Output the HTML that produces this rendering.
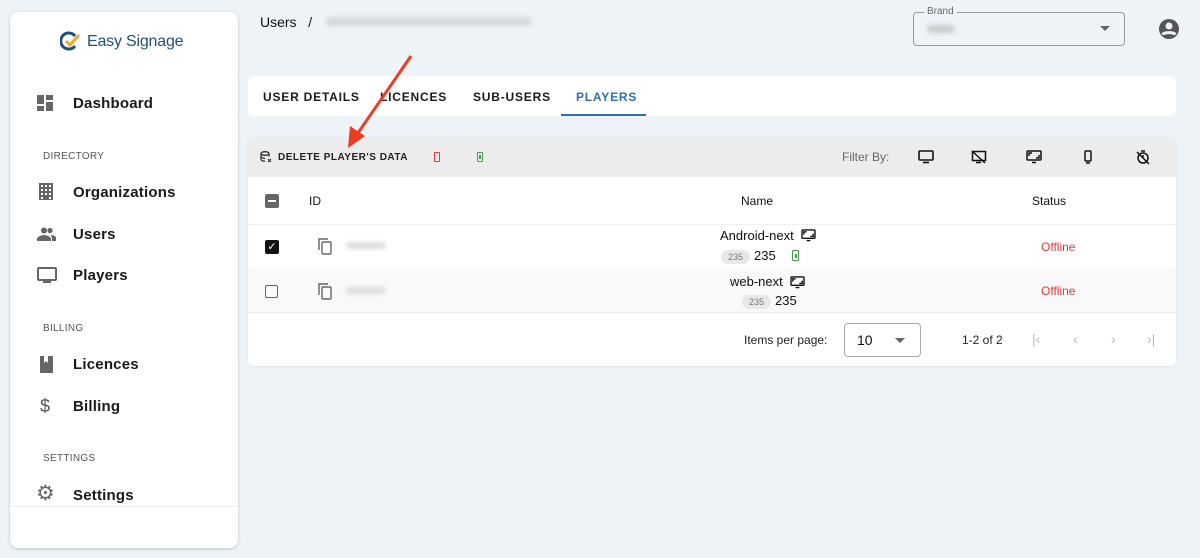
<!DOCTYPE html>
<html><head><style>
*{box-sizing:border-box;margin:0;padding:0}
body{width:1200px;height:558px;background:#eef3f8;font-family:"Liberation Sans",sans-serif;color:#111;position:relative;overflow:hidden}
.abs{position:absolute}
.side{left:10px;top:12px;width:228px;height:536px;background:#fff;border-radius:8px;box-shadow:0 1px 3px rgba(0,0,0,.2)}
.nav{position:absolute;left:73px;font-size:15px;font-weight:bold;color:#1a1a1a;letter-spacing:.2px}
.sec{position:absolute;left:43px;font-size:10px;color:#555;letter-spacing:.3px}
.ic{position:absolute;left:37px}
.tab{position:absolute;top:90px;font-size:12px;font-weight:bold;letter-spacing:.8px;color:#1a1a1a}
.blur{background:#ccc;filter:blur(2px);border-radius:4px}
.chip{display:inline-block;background:#e8e8e8;border-radius:8px;font-size:9px;color:#777;padding:2px 7px;margin-right:4px}
</style></head><body>
<div class="abs side"></div>
<svg class="abs" style="left:60px;top:31px" width="22" height="20" viewBox="0 0 22 20"><path d="M15 5A8 8 0 1 0 15 15" fill="none" stroke="#1f4f80" stroke-width="3"/><path d="M6 10l4 4 9-10" fill="none" stroke="#f1a52b" stroke-width="3"/></svg>
<div class="abs" style="left:87px;top:33px;font-size:16px;color:#1f4f80;letter-spacing:-.2px">Easy Signage</div>
<svg class="ic" style="top:95px" width="17" height="17" viewBox="0 0 17 17" fill="#666"><rect x="0" y="0" width="7" height="9"/><rect x="9" y="0" width="7" height="5"/><rect x="0" y="11" width="7" height="5"/><rect x="9" y="7" width="7" height="9"/></svg>
<div class="nav" style="top:95px">Dashboard</div>
<div class="sec" style="top:151px">DIRECTORY</div>
<svg class="ic" style="top:183px;left:39px" width="14" height="17" viewBox="0 0 14 17" fill="#666"><path d="M0 0h14v17H0z M2 2v2h2V2z M6 2v2h2V2z M10 2v2h2V2z M2 6v2h2V6z M6 6v2h2V6z M10 6v2h2V6z M2 10v2h2v-2z M6 10v2h2v-2z M10 10v2h2v-2z M2 14v2h2v-2z M10 14v2h2v-2z" fill-rule="evenodd"/></svg>
<div class="nav" style="top:184px">Organizations</div>
<svg class="ic" style="top:227px" width="19" height="14" viewBox="0 0 19 14" fill="#666"><circle cx="7" cy="3.5" r="3"/><circle cx="13" cy="3.5" r="2.6"/><path d="M0 14v-2c0-2 4-4 7-4s7 2 7 4v2z"/><path d="M14 8c3 0 5 1.5 5 3v3h-4v-2c0-1-0.5-2-1-4z"/></svg>
<div class="nav" style="top:226px">Users</div>
<svg class="ic" style="top:267px" width="20" height="17" viewBox="0 0 20 17"><rect x="1" y="1" width="18" height="12" rx="1" fill="none" stroke="#666" stroke-width="2"/><rect x="6" y="14" width="8" height="2" fill="#666"/></svg>
<div class="nav" style="top:267px">Players</div>
<div class="sec" style="top:323px">BILLING</div>
<svg class="ic" style="top:356px;left:39px" width="15" height="17" viewBox="0 0 15 17" fill="#666"><path d="M1 0h4v7l2-2 2 2V0h5v17H1z"/></svg>
<div class="nav" style="top:356px">Licences</div>
<div class="abs" style="left:40px;top:396px;font-size:18px;color:#555">$</div>
<div class="nav" style="top:398px">Billing</div>
<div class="sec" style="top:453px">SETTINGS</div>
<div class="abs" style="left:36px;top:483px;font-size:21px;color:#666;line-height:22px">⚙</div>
<div class="nav" style="top:487px">Settings</div>
<div class="abs" style="left:10px;top:506px;width:228px;height:1px;background:#eee"></div>

<div class="abs" style="left:260px;top:14px;font-size:14px">Users &nbsp; /</div>
<div class="abs blur" style="left:326px;top:17px;width:205px;height:9px;background:#d5d8dc"></div>
<div class="abs" style="left:913px;top:12px;width:212px;height:34px;border:1px solid #999;border-radius:4px"></div>
<div class="abs" style="left:924px;top:6px;font-size:10px;color:#666;background:#eef3f8;padding:0 3px">Brand</div>
<div class="abs blur" style="left:927px;top:25px;width:28px;height:8px;background:#ccc"></div>
<div class="abs" style="left:1100px;top:26px;border:5px solid transparent;border-top:5px solid #666"></div>
<svg class="abs" style="left:1158px;top:18px" width="22" height="22" viewBox="0 0 22 22"><circle cx="11" cy="11" r="10" fill="#555"/><circle cx="11" cy="8" r="3.5" fill="#eef3f8"/><path d="M4.5 16.5c2-2.5 11-2.5 13 0" stroke="#eef3f8" stroke-width="3" fill="none"/></svg>

<div class="abs" style="left:248px;top:76px;width:928px;height:40px;background:#fff;border-radius:6px"></div>
<div class="tab" style="left:263px">USER DETAILS</div>
<div class="tab" style="left:380px">LICENCES</div>
<div class="tab" style="left:473px">SUB-USERS</div>
<div class="tab" style="left:576px;color:#2f6fb5">PLAYERS</div>
<div class="abs" style="left:561px;top:114px;width:85px;height:2px;background:#2f6fb5"></div>

<div class="abs" style="left:248px;top:137px;width:928px;height:229px;background:#fff;border-radius:6px;box-shadow:0 1px 2px rgba(0,0,0,.06)"></div>
<div class="abs" style="left:248px;top:137px;width:928px;height:40px;background:#ececec;border-radius:6px 6px 0 0"></div>
<svg class="abs" style="left:260px;top:151px" width="12" height="12" viewBox="0 0 12 12"><ellipse cx="5" cy="2.5" rx="4" ry="1.8" fill="none" stroke="#333" stroke-width="1.3"/><path d="M1 2.5v6c0 1 2 1.8 4 1.8M9 2.5v3M1 5.5c0 1 2 1.8 4 1.8" fill="none" stroke="#333" stroke-width="1.3"/><path d="M8 8l3 3M11 8l-3 3" stroke="#333" stroke-width="1.2"/></svg>
<div class="abs" style="left:278px;top:152px;font-size:10px;font-weight:bold;letter-spacing:.5px;color:#222">DELETE PLAYER'S DATA</div>
<div class="abs" style="left:434px;top:152px;width:6px;height:10px;border:1.5px solid #e53935;border-radius:1px"></div>
<div class="abs" style="left:477px;top:152px;width:6px;height:10px;border:1.5px solid #43a047;border-radius:1px;background:linear-gradient(#43a047,#43a047) center/2px 4px no-repeat"></div>
<div class="abs" style="left:842px;top:150px;font-size:12px;color:#666">Filter By:</div>
<svg class="abs" style="left:918px;top:150px" width="16" height="14" viewBox="0 0 16 14" fill="none" stroke="#111" stroke-width="1.6"><rect x="1" y="1" width="14" height="9" rx="1"/><path d="M5 12.5h6"/></svg>
<svg class="abs" style="left:971px;top:150px" width="16" height="14" viewBox="0 0 16 14" fill="none" stroke="#111" stroke-width="1.5"><rect x="1.5" y="1.5" width="13" height="9"/><path d="M1 1l13 12M5 12.5h5"/></svg>
<svg class="abs" style="left:1026px;top:150px" width="16" height="14" viewBox="0 0 16 14" fill="none" stroke="#111" stroke-width="1.5"><rect x="1" y="1" width="14" height="9" rx="1"/><path d="M3 6v-3h3M13 5v3h-3M6 12.5h4"/></svg>
<svg class="abs" style="left:1083px;top:150px" width="10" height="14" viewBox="0 0 10 14" fill="none" stroke="#111" stroke-width="1.5"><rect x="2" y="1" width="6" height="10" rx="1"/><path d="M3 13h4"/></svg>
<svg class="abs" style="left:1136px;top:149px" width="14" height="16" viewBox="0 0 14 16" fill="none" stroke="#111" stroke-width="1.5"><circle cx="7" cy="9" r="5"/><path d="M5 2h4M7 9V6M1 3l12 12"/></svg>

<div class="abs" style="left:265px;top:194px;width:14px;height:14px;background:#666;border-radius:2px"><div style="margin:6px 3px;height:2px;background:#fff"></div></div>
<div class="abs" style="left:309px;top:194px;font-size:12px">ID</div>
<div class="abs" style="left:741px;top:194px;font-size:12px">Name</div>
<div class="abs" style="left:1032px;top:194px;font-size:12px">Status</div>
<div class="abs" style="left:248px;top:224px;width:928px;height:1px;background:#f1f1f1"></div>

<div class="abs" style="left:265px;top:240px;width:14px;height:14px;background:#111;border-radius:2px;color:#fff;font-size:11px;line-height:14px;text-align:center">✓</div>
<svg class="abs" style="left:318px;top:238px" width="16" height="17" viewBox="0 0 16 17" fill="none" stroke="#666" stroke-width="1.4"><path d="M1 12V1h9"/><rect x="4" y="4" width="9" height="12" rx="1"/></svg>
<div class="abs blur" style="left:346px;top:242px;width:40px;height:7px;background:#ddd"></div>
<div class="abs" style="left:720px;top:228px;font-size:13px">Android-next</div>
<svg class="abs" style="left:801px;top:229px" width="15" height="13" viewBox="0 0 16 14" fill="none" stroke="#111" stroke-width="1.5"><rect x="1" y="1" width="14" height="9" rx="1"/><path d="M3 6v-3h3M13 5v3h-3M6 12.5h4"/></svg>
<div class="abs" style="left:721px;top:248px;font-size:13px"><span class="chip">235</span>235</div>
<div class="abs" style="left:792px;top:250px;width:7px;height:11px;border:1.5px solid #43a047;border-radius:1px;background:linear-gradient(#43a047,#43a047) center/2px 4px no-repeat"></div>
<div class="abs" style="left:1041px;top:240px;font-size:12px;color:#e53935">Offline</div>

<div class="abs" style="left:248px;top:268px;width:928px;height:45px;background:#f9f9f9;border-bottom:1px solid #eee"></div>
<div class="abs" style="left:265px;top:285px;width:13px;height:13px;border:1.5px solid #666;border-radius:2px"></div>
<svg class="abs" style="left:318px;top:283px" width="16" height="17" viewBox="0 0 16 17" fill="none" stroke="#666" stroke-width="1.4"><path d="M1 12V1h9"/><rect x="4" y="4" width="9" height="12" rx="1"/></svg>
<div class="abs blur" style="left:346px;top:287px;width:40px;height:7px;background:#ddd"></div>
<div class="abs" style="left:730px;top:274px;font-size:13px">web-next</div>
<svg class="abs" style="left:790px;top:276px" width="15" height="13" viewBox="0 0 16 14" fill="none" stroke="#111" stroke-width="1.5"><rect x="1" y="1" width="14" height="9" rx="1"/><path d="M3 6v-3h3M13 5v3h-3M6 12.5h4"/></svg>
<div class="abs" style="left:742px;top:293px;font-size:13px"><span class="chip">235</span>235</div>
<div class="abs" style="left:1041px;top:284px;font-size:12px;color:#e53935">Offline</div>

<div class="abs" style="left:744px;top:333px;font-size:12px;color:#222">Items per page:</div>
<div class="abs" style="left:844px;top:323px;width:77px;height:34px;border:1px solid #aaa;border-radius:4px"></div>
<div class="abs" style="left:857px;top:332px;font-size:14px">10</div>
<div class="abs" style="left:895px;top:338px;border:5px solid transparent;border-top:5px solid #666"></div>
<div class="abs" style="left:962px;top:333px;font-size:12px;color:#222">1-2 of 2</div>
<div class="abs" style="left:1032px;top:331px;font-size:14px;color:#bbb">|‹</div>
<div class="abs" style="left:1073px;top:331px;font-size:14px;color:#bbb">‹</div>
<div class="abs" style="left:1111px;top:331px;font-size:14px;color:#bbb">›</div>
<div class="abs" style="left:1147px;top:331px;font-size:14px;color:#bbb">›|</div>

<svg class="abs" style="left:0;top:0" width="1200" height="558"><line x1="411" y1="56" x2="358" y2="133" stroke="#ee3b22" stroke-width="3"/><path d="M348 148l2-22 15 10z" fill="#ee3b22"/></svg>
</body></html>
